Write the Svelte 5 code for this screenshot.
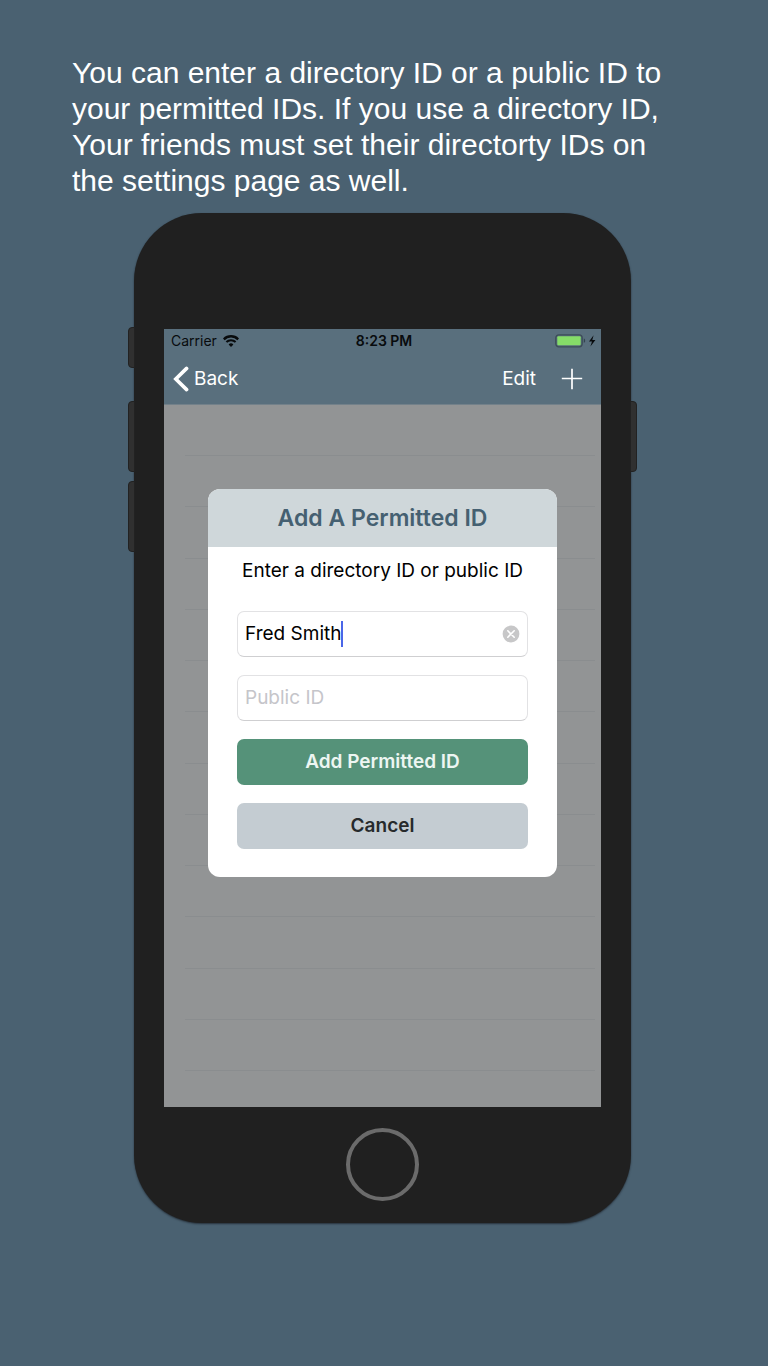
<script>
  const caption = [
    'You can enter a directory ID or a public ID to',
    'your permitted IDs. If you use a directory ID,',
    'Your friends must set their directorty IDs on',
    'the settings page as well.'
  ];
  const rows = Array.from({ length: 13 }, (_, i) => i);

  let directoryId = $state('Fred Smith');
  let publicId = $state('');
</script>

<main class="page">
  <p class="caption">
    {#each caption as line}
      <span>{line}</span>
    {/each}
  </p>

  <section class="phone">
    <i class="key mute"></i>
    <i class="key vol-up"></i>
    <i class="key vol-down"></i>
    <i class="key power"></i>

    <div class="screen">
      <header class="top">
        <div class="status">
          <div class="carrier">
            <span>Carrier</span>
            <svg width="16" height="12" viewBox="0 0 16 12" aria-hidden="true">
              <path d="M0.8 4.3a10.2 10.2 0 0 1 14.4 0" fill="none" stroke="#080b0d" stroke-width="2.4" />
              <path d="M3.4 7.1a6.5 6.5 0 0 1 9.2 0" fill="none" stroke="#080b0d" stroke-width="2.1" />
              <path d="M5.6 9.4a3.4 3.4 0 0 1 4.8 0L8 11.9z" fill="#080b0d" />
            </svg>
          </div>
          <time>8:23 PM</time>
          <div class="power-state">
            <svg width="42" height="14" viewBox="0 0 42 14" aria-hidden="true">
              <rect x="0.8" y="0.8" width="26.4" height="12" rx="3" fill="none" stroke="#3d4d58" stroke-width="1.3" />
              <rect x="2.3" y="2.3" width="23.4" height="9" rx="1" fill="#85dc68" />
              <path d="M28.8 4.6c1.8.6 1.8 3.8 0 4.4z" fill="#34434e" />
              <path d="M38.6 1.2L34 7.6h3L35.4 12.4 40.4 6h-3.1z" fill="#080b0d" />
            </svg>
          </div>
        </div>

        <nav class="bar">
          <a class="back" href="#back">
            <svg width="16" height="26" viewBox="0 0 16 26" aria-hidden="true">
              <path d="M13.6 2.4L2.8 13l10.8 10.6" fill="none" stroke="#fff" stroke-width="3.6" stroke-linecap="round" />
            </svg>
            <span>Back</span>
          </a>
          <div class="actions">
            <button type="button">Edit</button>
            <button type="button" class="plus" aria-label="Add">
              <svg width="22" height="22" viewBox="0 0 22 22" aria-hidden="true">
                <path d="M11 0.8v20.4M0.8 10.5h20.4" stroke="#fff" stroke-width="1.7" />
              </svg>
            </button>
          </div>
        </nav>
      </header>

      <div class="content">
        <ul class="rows">
          {#each rows as row (row)}
            <li></li>
          {/each}
        </ul>

        <div class="overlay">
          <form class="dialog" onsubmit={(e) => e.preventDefault()}>
            <h1>Add A Permitted ID</h1>
            <label class="hint" for="directory">Enter a directory ID or public ID</label>
            <div class="fields">
              <div class="field">
                <input id="directory" class="fit" type="text" autocomplete="off" spellcheck="false" bind:value={directoryId} />
                <i class="caret"></i>
                <button class="clear" type="button" aria-label="Clear" onclick={() => (directoryId = '')}>
                  <svg width="18" height="18" viewBox="0 0 18 18" aria-hidden="true">
                    <circle cx="9" cy="9" r="8.4" fill="#c7c7c8" />
                    <path d="M5.8 5.8l6.4 6.4M12.2 5.8l-6.4 6.4" stroke="#fff" stroke-width="1.6" stroke-linecap="round" />
                  </svg>
                </button>
              </div>
              <div class="field">
                <input class="wide" type="text" aria-label="Public ID" placeholder="Public ID" bind:value={publicId} />
              </div>
              <button class="action add" type="submit">Add Permitted ID</button>
              <button class="action cancel" type="button">Cancel</button>
            </div>
          </form>
        </div>
      </div>
    </div>

    <button class="home" type="button" aria-label="Home"></button>
  </section>
</main>

<style>
  :global(body) {
    background: #4a6171;
  }

  * {
    box-sizing: border-box;
  }

  .page {
    min-height: 100vh;
    padding: 55px 75px 0 72px;
    display: flex;
    flex-direction: column;
    align-items: center;
    font-family: Inter, 'Liberation Sans', sans-serif;
  }

  .caption {
    align-self: stretch;
    margin: 0 0 14px;
    color: #fff;
    font: 30px/36px 'Liberation Sans', Arial, sans-serif;
  }

  .caption span {
    display: block;
  }

  .phone {
    position: relative;
    width: 100%;
    max-width: 497px;
    padding: 116px 30px 22px;
    border-radius: 68px;
    background: #202020;
    box-shadow: 0 1px 2px #26303a;
    display: flex;
    flex-direction: column;
    align-items: center;
  }

  .key {
    position: absolute;
    left: -6px;
    width: 7px;
    height: 71px;
    background: #303030;
    border: 1px solid #222;
    border-radius: 4px 0 0 4px;
  }

  .mute {
    top: 114px;
    height: 41px;
  }

  .vol-up,
  .power {
    top: 188px;
  }

  .vol-down {
    top: 268px;
  }

  .power {
    left: auto;
    right: -6px;
    border-radius: 0 4px 4px 0;
  }

  .screen {
    width: 100%;
    background: #929495;
  }

  .top {
    background: #596f7d;
    border-bottom: 1px solid #73818a;
  }

  .status {
    display: grid;
    grid-template-columns: 1fr auto 1fr;
    align-items: center;
    height: 24px;
    padding: 0 4px 0 7px;
    color: #080b0d;
    font-size: 14px;
    line-height: 16px;
  }

  .carrier {
    display: flex;
    align-items: center;
    gap: 6px;
  }

  .status time {
    font-weight: 600;
  }

  .power-state {
    display: flex;
    justify-content: flex-end;
  }

  .bar {
    display: flex;
    align-items: center;
    justify-content: space-between;
    height: 51px;
    padding: 0 18px 0 9px;
    font-size: 19px;
    line-height: 24px;
  }

  .back {
    display: flex;
    align-items: center;
    gap: 5px;
    color: #fff;
    text-decoration: none;
  }

  svg {
    display: block;
  }

  button {
    margin: 0;
    padding: 0;
    border: 0;
    background: none;
    color: #fff;
    font: inherit;
  }

  .actions {
    display: flex;
    align-items: center;
    gap: 25px;
  }

  .content {
    position: relative;
  }

  .rows {
    margin: 0;
    padding: 0 6px 36px 21px;
    height: 702px;
    list-style: none;
    display: flex;
    flex-direction: column;
  }

  .rows li {
    flex: 1;
    border-bottom: 1px solid #8a8d8f;
  }

  .overlay {
    position: absolute;
    inset: 0;
    padding: 84px 44px;
  }

  .dialog {
    overflow: hidden;
    border-radius: 12px;
    background: #fff;
  }

  h1 {
    margin: 0;
    padding: 14px 0;
    background: #cfd7da;
    color: #456071;
    font-size: 23px;
    line-height: 30px;
    font-weight: 600;
    text-align: center;
  }

  .hint {
    display: block;
    padding: 12px 0 28px;
    color: #000;
    font-size: 19px;
    line-height: 24px;
    text-align: center;
  }

  .fields {
    display: flex;
    flex-direction: column;
    gap: 18px;
    padding: 0 29px 28px;
  }

  .field {
    display: flex;
    align-items: center;
    height: 46px;
    padding: 0 7px;
    border: 1px solid #e2e2e4;
    border-bottom-color: #cfcfd1;
    border-radius: 7px;
  }

  input {
    min-width: 0;
    height: 24px;
    margin: 0;
    padding: 0;
    border: 0;
    outline: 0;
    background: none;
    color: #000;
    font: inherit;
    font-size: 19px;
    line-height: 24px;
  }

  input::placeholder {
    color: #c5c5ca;
    opacity: 1;
  }

  .fit {
    field-sizing: content;
    caret-color: transparent;
  }

  .wide {
    flex: 1;
  }

  .caret {
    width: 2px;
    height: 26px;
    background: #4a66e8;
  }

  .clear {
    margin-left: auto;
  }

  .action {
    height: 46px;
    border-radius: 7px;
    font-size: 19px;
    line-height: 24px;
    font-weight: 600;
  }

  .add {
    background: #559279;
    color: #edf6f2;
  }

  .cancel {
    background: #c4ccd2;
    color: #272a2c;
  }

  .home {
    width: 73px;
    height: 73px;
    margin-top: 21px;
    border: 4px solid #6b6b6b;
    border-radius: 50%;
  }
</style>
